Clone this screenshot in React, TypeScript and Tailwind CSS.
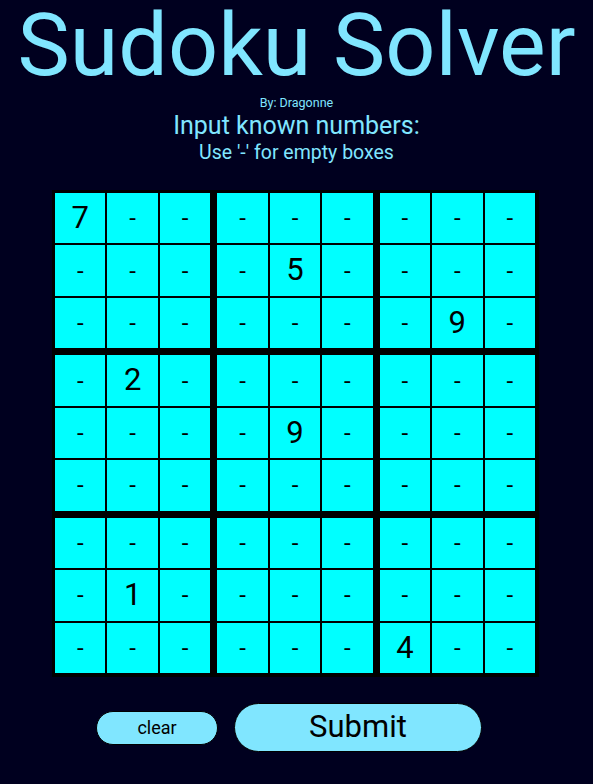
import React from "react";

const start = [
  "7--------",
  "----5----",
  "-------9-",
  "-2-------",
  "----9----",
  "---------",
  "---------",
  "-1-------",
  "------4--",
];

function Block({ br, bc }: { br: number; bc: number }) {
  const cells = [];
  for (let r = 0; r < 3; r++) {
    for (let c = 0; c < 3; c++) {
      const v = start[br * 3 + r][bc * 3 + c];
      cells.push(
        <div
          key={r * 3 + c}
          className={
            "bg-[#00ffff] flex items-center justify-center text-black " +
            (v === "-" ? "text-[24px]" : "text-[31px]")
          }
        >
          {v}
        </div>
      );
    }
  }
  return <div className="grid grid-cols-3 grid-rows-3 gap-[2px]">{cells}</div>;
}

export default function App() {
  return (
    <div
      className="min-h-[784px] bg-[#00001f] flex flex-col items-center"
      style={{ fontFamily: "Roboto, 'Liberation Sans', sans-serif" }}
    >
      <h1 className="text-[88px] leading-[90px] text-[#80e6ff]">Sudoku Solver</h1>
      <p className="text-[12.5px] leading-[18px] text-[#80e6ff] mt-[4px]">By: Dragonne</p>
      <h2 className="text-[25px] leading-[28px] text-[#80e6ff]">Input known numbers:</h2>
      <p className="text-[19.5px] leading-[23px] text-[#80e6ff] mt-[1px]">Use '-' for empty boxes</p>

      <div className="mt-[26px] w-[487px] h-[487px] bg-black pl-[3px] pt-[3px] pr-[4px] pb-[4px] grid grid-cols-3 grid-rows-3 gap-[7px] ml-[-2px]">
        {[0, 1, 2].map((br) =>
          [0, 1, 2].map((bc) => <Block key={br * 3 + bc} br={br} bc={bc} />)
        )}
      </div>

      <div className="flex items-center gap-4 mt-[26px] pr-[15px]">
        <button className="w-[122px] h-[34px] rounded-full bg-[#80e6ff] border border-black text-[18px] text-black">
          clear
        </button>
        <button className="w-[248px] h-[49px] rounded-full bg-[#80e6ff] border border-black text-[31px] text-black">
          Submit
        </button>
      </div>
    </div>
  );
}
